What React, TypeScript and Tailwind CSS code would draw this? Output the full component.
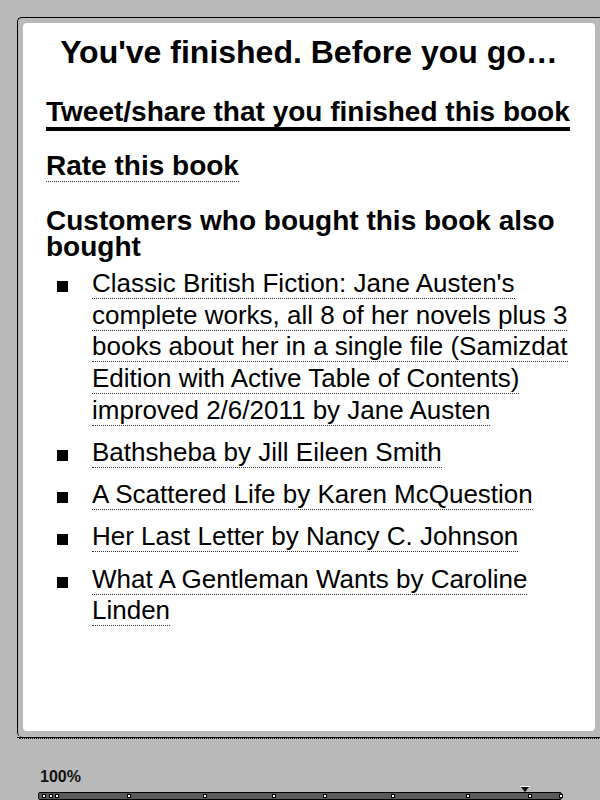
const BOOKS = [
  "Classic British Fiction: Jane Austen's complete works, all 8 of her novels plus 3 books about her in a single file (Samizdat Edition with Active Table of Contents) improved 2/6/2011 by Jane Austen",
  "Bathsheba by Jill Eileen Smith",
  "A Scattered Life by Karen McQuestion",
  "Her Last Letter by Nancy C. Johnson",
  "What A Gentleman Wants by Caroline Linden",
];

const TICKS = [43, 50, 56, 128, 204, 273, 324, 392, 467, 529, 560];

export default function App() {
  return (
    <div
      className="relative h-[800px] w-[600px] overflow-hidden bg-[#b9b9b9]"
      style={{ fontFamily: '"Liberation Sans", Arial, sans-serif' }}
    >
      {/* reader frame */}
      <div className="ml-[17px] mt-[17px] w-[600px] rounded-l-[5px] border-l border-t border-black pl-[5px] pt-[5px] pb-[6px]">
        <div className="h-[708px] w-[572px] rounded-[4px] bg-white pl-[23px] pr-[8px] text-black">
          <h1 className="pt-[12px] pr-[15px] text-center text-[32px] font-bold leading-[34px]">
            You've finished. Before you go…
          </h1>

          <div className="mt-[28px]">
            <span className="inline-block border-b-4 border-black text-[28px] font-bold leading-[30px]">
              Tweet/share that you finished this book
            </span>
          </div>

          <div className="mt-[20px] h-[30px]">
            <span className="border-b border-dotted border-[#333] text-[28px] font-bold leading-[30px]">
              Rate this book
            </span>
          </div>

          <h2 className="mt-[27px] pr-[10px] text-[28px] font-bold leading-[26px]">
            Customers who bought this book also bought
          </h2>

          <ul className="mt-[8px] flex flex-col gap-[10.5px]">
            {BOOKS.map((b) => (
              <li key={b} className="flex text-[26px] leading-[31.7px]">
                <span className="ml-[11px] mt-[13px] h-[11px] w-[11px] shrink-0 bg-black" />
                <span className="ml-[24px] pr-[4px]">
                  <span className="border-b border-dotted border-[#333]">{b}</span>
                </span>
              </li>
            ))}
          </ul>
        </div>
      </div>
      <div className="ml-[17px] h-[1px] w-[590px] bg-black" />
      <div className="ml-[19px] h-[1px] w-[590px] border-b border-dotted border-black" />

      {/* progress */}
      <div className="ml-[40px] mt-[29px] text-[16px] font-bold leading-[18px] text-[#111]">100%</div>
      <div className="relative ml-[38px] mt-[6px] h-[8px] w-[524px] rounded-[2px] border border-black bg-[#5a5a5a]">
        {TICKS.map((x) => (
          <span
            key={x}
            className="absolute top-[1px] h-[4px] w-[4px] border border-black bg-white"
            style={{ left: x - 38 - 2 }}
          />
        ))}
        <svg className="absolute -top-[7px] left-[481px]" width="10" height="6" viewBox="0 0 10 6">
          <rect x="0" y="0" width="10" height="1" fill="#fff" />
          <polygon points="1,1 9,1 5,6" fill="#000" />
        </svg>
      </div>
    </div>
  );
}
